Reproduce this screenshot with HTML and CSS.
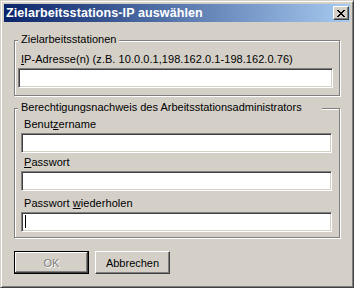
FILE: index.html
```html
<!DOCTYPE html>
<html lang="de">
<head>
    <meta charset="UTF-8">
    <title>Zielarbeitsstations-IP auswählen</title>
    <link rel="stylesheet" href="styles.css">
</head>
<body>
    <div class="window">
        <div class="titlebar">
            <span class="title">Zielarbeitsstations-IP auswählen</span>
            <button class="close" type="button" aria-label="Schließen">
                <svg width="8" height="7" viewBox="0 0 8 7">
                    <path d="M0 0h2v1H0zM6 0h2v1H6zM1 1h2v1H1zM5 1h2v1H5zM2 2h4v1H2zM3 3h2v1H3zM2 4h4v1H2zM1 5h2v1H1zM5 5h2v1H5zM0 6h2v1H0zM6 6h2v1H6z" fill="#000"/>
                </svg>
            </button>
        </div>

        <!-- Target workstations -->
        <div class="group group-targets">
            <span class="caption">Zielarbeitsstationen</span>
            <div class="label"><u>I</u>P-Adresse(n) (z.B. 10.0.0.1,198.162.0.1-198.162.0.76)</div>
            <div class="edit"></div>
        </div>

        <!-- Credentials -->
        <div class="group group-creds">
            <span class="caption caption-wide">Berechtigungsnachweis des Arbeitsstationsadministrators</span>
            <div class="field">
                <div class="label">Benut<u>z</u>ername</div>
                <div class="edit"></div>
            </div>
            <div class="field field-second">
                <div class="label"><u>P</u>asswort</div>
                <div class="edit"></div>
            </div>
            <div class="field field-third">
                <div class="label">Passwort <u>w</u>iederholen</div>
                <div class="edit focused"><span class="caret"></span></div>
            </div>
        </div>

        <div class="buttons">
            <button class="btn btn-default" type="button" disabled>OK</button>
            <button class="btn" type="button">Abbrechen</button>
        </div>
    </div>
</body>
</html>
```

FILE: styles.css
```css
/* General styles */
* {
    margin: 0;
    padding: 0;
    box-sizing: border-box;
    font-family: 'Liberation Sans', Arial, sans-serif;
}

body {
    background: #d4d0c8;
    font-size: 11px;
    line-height: 13px;
    color: #000;
}

.window {
    width: 354px;
    height: 288px;
    display: flex;
    flex-direction: column;
    padding: 3px;
    background: #d4d0c8;
    border: 1px solid;
    border-color: #d4d0c8 #404040 #404040 #d4d0c8;
    box-shadow: inset 1px 1px 0 #fff, inset -1px -1px 0 #808080;
}

/* Title bar */
.titlebar {
    height: 18px;
    display: flex;
    align-items: center;
    justify-content: space-between;
    padding: 0 1px 0 2px;
    background: linear-gradient(to right, #0a246a, #a6caf0);
}

.title {
    color: #fff;
    font-weight: bold;
    font-size: 12.5px;
    letter-spacing: 0.1px;
    white-space: nowrap;
}

.close {
    width: 16px;
    height: 14px;
    display: flex;
    align-items: center;
    justify-content: center;
    background: #d4d0c8;
    border: 1px solid;
    border-color: #fff #404040 #404040 #fff;
    box-shadow: inset -1px -1px 0 #808080;
}

/* Group boxes */
.group {
    position: relative;
    margin: 0 10px;
    border: 1px solid #808080;
    box-shadow: 1px 1px 0 #fff, inset 1px 1px 0 #fff;
}

.caption {
    position: absolute;
    top: -8px;
    left: 3px;
    padding: 0 3px;
    background: #d4d0c8;
    white-space: nowrap;
}

.caption-wide {
    width: 304px;
}

.group-targets {
    height: 56px;
    margin-top: 18px;
    padding: 12px 6px 7px 3px;
}

.group-creds {
    height: 130px;
    margin-top: 12px;
    padding: 9px 7px 5px 6px;
}

.label {
    padding-left: 3px;
    margin-bottom: 2px;
    white-space: nowrap;
    letter-spacing: 0.05px;
}

.field-second {
    margin-top: 3px;
}

.field-third {
    margin-top: 6px;
}

/* Sunken edit boxes */
.edit {
    position: relative;
    height: 20px;
    background: #fff;
    border: 1px solid;
    border-color: #808080 #fff #fff #808080;
    box-shadow: inset 1px 1px 0 #404040, inset -1px -1px 0 #d4d0c8;
}

.caret {
    position: absolute;
    left: 3px;
    top: 2px;
    width: 1px;
    height: 13px;
    background: #000;
}

/* Push buttons */
.buttons {
    display: flex;
    gap: 6px;
    margin: 13px 0 0 10px;
}

.btn {
    width: 75px;
    height: 23px;
    font-size: 11px;
    background: #d4d0c8;
    color: #000;
    border: 1px solid;
    border-color: #fff #404040 #404040 #fff;
    box-shadow: inset -1px -1px 0 #808080;
}

.btn-default {
    border: 1px solid #000;
    box-shadow: inset -1px -1px 0 #404040, inset 1px 1px 0 #fff, inset -2px -2px 0 #808080;
}

.btn:disabled {
    color: #808080;
    text-shadow: 1px 1px 0 #fff;
}
```
